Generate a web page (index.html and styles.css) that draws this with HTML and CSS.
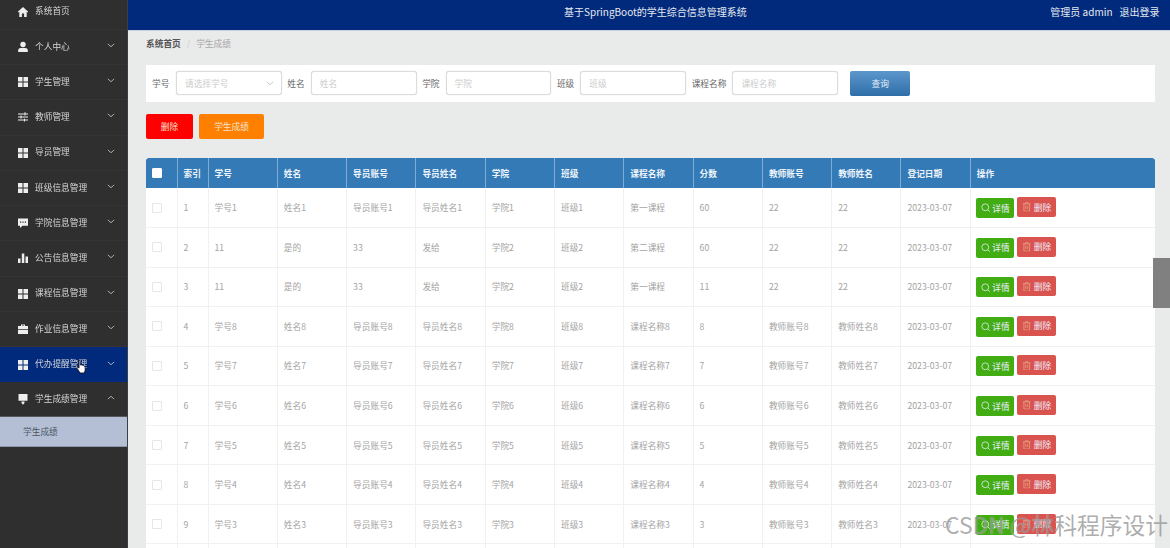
FILE: index.html
```html
<!DOCTYPE html>
<html lang="zh-CN">
<head>
<meta charset="utf-8">
<title>学生成绩</title>
<link rel="stylesheet" href="styles.css">
</head>
<body>
<svg class="defs" width="0" height="0" aria-hidden="true">
  <symbol id="i-home" viewBox="0 0 12 12"><path d="M6 1 .8 5.8l.7.7.8-.7V11h2.6V7.6h2.2V11h2.6V5.8l.8.7.7-.7z"/></symbol>
  <symbol id="i-user" viewBox="0 0 12 12"><circle cx="6" cy="3.4" r="2.7"/><path d="M1.2 11V9.2C1.2 7.6 3 6.8 6 6.8s4.800.8 4.800 2.400V11z"/></symbol>
  <symbol id="i-grid" viewBox="0 0 12 12"><path d="M1 1h4.500v4.500H1zM6.500 1H11v4.500H6.500zM1 6.500h4.500V11H1zM6.500 6.500H11V11H6.500z"/></symbol>
  <symbol id="i-tune" viewBox="0 0 12 12"><path d="M1 2.400h6.500V1.300h1v1.100H11v1H8.500v1.100h-1V3.400H1zM1 5.500h2.500V4.600h1v.9H11v1H4.500v1h-1v-1H1zM1 8.600h6V7.700h1v.9h3v1H8v1H7v-1H1z"/></symbol>
  <symbol id="i-chat" viewBox="0 0 12 12"><path d="M1 1.500h10v7.300H5.500L3 11V8.800H1z"/><path fill="#2f2f2f" d="M3 4.500h1.200v1.200H3zM5.400 4.500h1.200v1.200H5.400zM7.800 4.500H9v1.200H7.800z"/></symbol>
  <symbol id="i-bars" viewBox="0 0 12 12"><path d="M1 6.500h2.500V11H1zM4.800 1.500h2.500V11H4.800zM8.500 4.500H11V11H8.500z"/></symbol>
  <symbol id="i-case" viewBox="0 0 12 12"><path d="M4 3V1.500h4V3h3v3.200H1V3zm1 0h2v-.6H5zM1 7h10v4H1z"/></symbol>
  <symbol id="i-pin" viewBox="0 0 12 12"><path d="M1.500 1h9v6.800h-9zM4.500 8.500h3V10L6 11.800 4.500 10z"/></symbol>
  <symbol id="i-down" viewBox="0 0 10 6"><path d="M1 1l4 3.500L9 1" fill="none" stroke="currentColor" stroke-width="1"/></symbol>
  <symbol id="i-up" viewBox="0 0 10 6"><path d="M1 5l4-3.500L9 5" fill="none" stroke="currentColor" stroke-width="1"/></symbol>
  <symbol id="i-search" viewBox="0 0 10 10"><circle cx="4.500" cy="4.500" r="3.600" fill="none" stroke="currentColor" stroke-width=".8"/><path d="M7.200 7.200 9.300 9.300" stroke="currentColor" stroke-width=".8"/></symbol>
  <symbol id="i-trash" viewBox="0 0 10 10"><path d="M1 2h8M3.500 2V.8h3V2M2 2v7.500h6V2M4 4v3.500M6 4v3.500" fill="none" stroke="currentColor" stroke-width=".7"/></symbol>
</svg>
<div class="app">
  <aside class="side">
    <ul class="menu">
      <li class="item"><svg class="ic"><use href="#i-home"/></svg><span class="lbl">系统首页</span></li>
      <li class="item"><svg class="ic"><use href="#i-user"/></svg><span class="lbl">个人中心</span><svg class="chev"><use href="#i-down"/></svg></li>
      <li class="item"><svg class="ic"><use href="#i-grid"/></svg><span class="lbl">学生管理</span><svg class="chev"><use href="#i-down"/></svg></li>
      <li class="item"><svg class="ic"><use href="#i-tune"/></svg><span class="lbl">教师管理</span><svg class="chev"><use href="#i-down"/></svg></li>
      <li class="item"><svg class="ic"><use href="#i-grid"/></svg><span class="lbl">导员管理</span><svg class="chev"><use href="#i-down"/></svg></li>
      <li class="item"><svg class="ic"><use href="#i-grid"/></svg><span class="lbl">班级信息管理</span><svg class="chev"><use href="#i-down"/></svg></li>
      <li class="item"><svg class="ic"><use href="#i-chat"/></svg><span class="lbl">学院信息管理</span><svg class="chev"><use href="#i-down"/></svg></li>
      <li class="item"><svg class="ic"><use href="#i-bars"/></svg><span class="lbl">公告信息管理</span><svg class="chev"><use href="#i-down"/></svg></li>
      <li class="item"><svg class="ic"><use href="#i-grid"/></svg><span class="lbl">课程信息管理</span><svg class="chev"><use href="#i-down"/></svg></li>
      <li class="item"><svg class="ic"><use href="#i-case"/></svg><span class="lbl">作业信息管理</span><svg class="chev"><use href="#i-down"/></svg></li>
      <li class="item active"><svg class="ic"><use href="#i-grid"/></svg><span class="lbl">代办提醒管理</span><svg class="chev"><use href="#i-down"/></svg>
        <svg class="cursor" viewBox="0 0 12 16"><path d="M3.500 1.200c.7 0 1.200.5 1.200 1.200v4l.6-.2.700.1.500.4.700-.1.600.4.700 0 .8.600.7 1.500v3l-1 3H4.500l-3.300-5c-.4-.7 0-1.300.6-1.300.4 0 .8.300 1.500 1V2.400c0-.7-.1-1.200.2-1.200z" fill="#fff" stroke="#111" stroke-width=".9"/></svg>
      </li>
      <li class="item open"><svg class="ic"><use href="#i-pin"/></svg><span class="lbl">学生成绩管理</span><svg class="chev"><use href="#i-up"/></svg></li>
      <li class="sub">学生成绩</li>
    </ul>
  </aside>
  <div class="main">
    <header class="top">
      <div class="title">基于SpringBoot的学生综合信息管理系统</div>
      <div class="user"><span>管理员 admin</span><span>退出登录</span></div>
    </header>
    <div class="content">
      <nav class="crumb"><b>系统首页</b><i>/</i><span>学生成绩</span></nav>
      <form class="search">
        <label>学号</label>
        <div class="field select"><span>请选择学号</span><svg class="chev"><use href="#i-down"/></svg></div>
        <label>姓名</label><div class="field"><span>姓名</span></div>
        <label>学院</label><div class="field"><span>学院</span></div>
        <label>班级</label><div class="field"><span>班级</span></div>
        <label>课程名称</label><div class="field"><span>课程名称</span></div>
        <div class="query">查询</div>
      </form>
      <div class="actions"><div class="btn red">删除</div><div class="btn orange">学生成绩</div></div>
      <table class="grid">
        <thead>
          <tr><th><span class="check head"></span></th><th>索引</th><th>学号</th><th>姓名</th><th>导员账号</th><th>导员姓名</th><th>学院</th><th>班级</th><th>课程名称</th><th>分数</th><th>教师账号</th><th>教师姓名</th><th>登记日期</th><th>操作</th></tr>
        </thead>
        <tbody>
          <tr><td><span class="check"></span></td><td>1</td><td>学号1</td><td>姓名1</td><td>导员账号1</td><td>导员姓名1</td><td>学院1</td><td>班级1</td><td>第一课程</td><td>60</td><td>22</td><td>22</td><td>2023-03-07</td><td><div class="ops"><span class="mini ok"><svg><use href="#i-search"/></svg>详情</span><span class="mini del"><svg><use href="#i-trash"/></svg>删除</span></div></td></tr>
          <tr><td><span class="check"></span></td><td>2</td><td>11</td><td>是的</td><td>33</td><td>发给</td><td>学院2</td><td>班级2</td><td>第二课程</td><td>60</td><td>22</td><td>22</td><td>2023-03-07</td><td><div class="ops"><span class="mini ok"><svg><use href="#i-search"/></svg>详情</span><span class="mini del"><svg><use href="#i-trash"/></svg>删除</span></div></td></tr>
          <tr><td><span class="check"></span></td><td>3</td><td>11</td><td>是的</td><td>33</td><td>发给</td><td>学院2</td><td>班级2</td><td>第一课程</td><td>11</td><td>22</td><td>22</td><td>2023-03-07</td><td><div class="ops"><span class="mini ok"><svg><use href="#i-search"/></svg>详情</span><span class="mini del"><svg><use href="#i-trash"/></svg>删除</span></div></td></tr>
          <tr><td><span class="check"></span></td><td>4</td><td>学号8</td><td>姓名8</td><td>导员账号8</td><td>导员姓名8</td><td>学院8</td><td>班级8</td><td>课程名称8</td><td>8</td><td>教师账号8</td><td>教师姓名8</td><td>2023-03-07</td><td><div class="ops"><span class="mini ok"><svg><use href="#i-search"/></svg>详情</span><span class="mini del"><svg><use href="#i-trash"/></svg>删除</span></div></td></tr>
          <tr><td><span class="check"></span></td><td>5</td><td>学号7</td><td>姓名7</td><td>导员账号7</td><td>导员姓名7</td><td>学院7</td><td>班级7</td><td>课程名称7</td><td>7</td><td>教师账号7</td><td>教师姓名7</td><td>2023-03-07</td><td><div class="ops"><span class="mini ok"><svg><use href="#i-search"/></svg>详情</span><span class="mini del"><svg><use href="#i-trash"/></svg>删除</span></div></td></tr>
          <tr><td><span class="check"></span></td><td>6</td><td>学号6</td><td>姓名6</td><td>导员账号6</td><td>导员姓名6</td><td>学院6</td><td>班级6</td><td>课程名称6</td><td>6</td><td>教师账号6</td><td>教师姓名6</td><td>2023-03-07</td><td><div class="ops"><span class="mini ok"><svg><use href="#i-search"/></svg>详情</span><span class="mini del"><svg><use href="#i-trash"/></svg>删除</span></div></td></tr>
          <tr><td><span class="check"></span></td><td>7</td><td>学号5</td><td>姓名5</td><td>导员账号5</td><td>导员姓名5</td><td>学院5</td><td>班级5</td><td>课程名称5</td><td>5</td><td>教师账号5</td><td>教师姓名5</td><td>2023-03-07</td><td><div class="ops"><span class="mini ok"><svg><use href="#i-search"/></svg>详情</span><span class="mini del"><svg><use href="#i-trash"/></svg>删除</span></div></td></tr>
          <tr><td><span class="check"></span></td><td>8</td><td>学号4</td><td>姓名4</td><td>导员账号4</td><td>导员姓名4</td><td>学院4</td><td>班级4</td><td>课程名称4</td><td>4</td><td>教师账号4</td><td>教师姓名4</td><td>2023-03-07</td><td><div class="ops"><span class="mini ok"><svg><use href="#i-search"/></svg>详情</span><span class="mini del"><svg><use href="#i-trash"/></svg>删除</span></div></td></tr>
          <tr><td><span class="check"></span></td><td>9</td><td>学号3</td><td>姓名3</td><td>导员账号3</td><td>导员姓名3</td><td>学院3</td><td>班级3</td><td>课程名称3</td><td>3</td><td>教师账号3</td><td>教师姓名3</td><td>2023-03-07</td><td><div class="ops"><span class="mini ok"><svg><use href="#i-search"/></svg>详情</span><span class="mini del"><svg><use href="#i-trash"/></svg>删除</span></div></td></tr>
          <tr><td></td><td></td><td></td><td></td><td></td><td></td><td></td><td></td><td></td><td></td><td></td><td></td><td></td><td></td></tr>
        </tbody>
      </table>
    </div>
  </div>
  <div class="thumb"></div>
  <div class="mark">CSDN @林科程序设计</div>
</div>
</body>
</html>
```
FILE: styles.css
```css
* { box-sizing: border-box; }
html, body { margin: 0; height: 548px; overflow: hidden; background: #e9eaea; }
body { font-family: "Noto Sans CJK SC", "Liberation Sans", sans-serif; font-size: 8.7px; color: #888; }
.defs { position: absolute; }
.app { position: relative; display: flex; width: 1170px; height: 548px; overflow: hidden; filter: blur(.35px); }
.side { flex: 0 0 128px; background: #2f2f2f; overflow: hidden; border-right: 1px solid #3a4048; }
.menu { list-style: none; margin: -5.4px 0 0; padding: 0; }
.item { position: relative; display: flex; align-items: center; height: 35.25px; padding-left: 17px; color: #d6d6d6; border-bottom: 1px solid #353535; }
.item.active { background: #012a7c; border-bottom: 0; }
.item.open { height: 35px; border-bottom: 1px solid #55585c; }
.ic { width: 12px; height: 12px; margin-right: 6px; fill: #eee; flex: none; }
.lbl { flex: 1; line-height: 1; }
.chev { width: 8px; height: 5px; margin-right: 12px; margin-top: -3px; color: #ccc; flex: none; }
.cursor { position: absolute; left: 76px; top: 12px; width: 11px; height: 15px; }
.sub { height: 30px; display: flex; align-items: center; padding-left: 23px; background: #b4bfd6; color: #4b5563; border-bottom: 1px solid #8d97ab; }
.main { flex: 1; min-width: 0; display: flex; flex-direction: column; }
.top { flex: 0 0 31px; display: flex; align-items: flex-start; justify-content: space-between; background: #012a7c; color: #e4e8f0; font-size: 10px; line-height: 24px; border-bottom: 1px solid #c8d2e4; position: relative; }
.title { margin-left: 436px; }
.user { display: flex; gap: 7px; margin-right: 10.5px; }
.content { flex: 1; padding: 0 15px 0 18px; background: #e9eaea; }
.crumb { height: 34px; display: flex; align-items: flex-start; gap: 6px; font-size: 8.7px; color: #a8a8a8; padding-top: 6px; }
.crumb b { color: #555; font-weight: 700; }
.crumb i { color: #ccc; font-style: normal; }
.search { height: 37px; display: flex; align-items: center; background: #fff; padding: 0 0 1px 6px; color: #666; }
.search label { margin-right: 6px; flex: none; }
.field { width: 105.8px; height: 24px; border: 1px solid #dcdcdc; border-radius: 3px; box-shadow: 0 0 1px #ccc; background: #fff; display: flex; align-items: center; justify-content: space-between; padding-left: 8px; color: #ccc; margin-right: 5.6px; flex: none; }
.field.select { margin-left: .6px; }
.field .chev { margin: 0 7px 0 0; color: #bbb; }
.query { width: 60px; height: 25px; margin-left: 6.4px; background: linear-gradient(#5c97cc, #2f6ea9); border-radius: 2px; color: #e8eff6; display: flex; align-items: center; justify-content: center; flex: none; }
.actions { display: flex; gap: 6px; margin-top: 12px; }
.btn { height: 25px; border-radius: 2px; color: #f2e3d0; display: flex; align-items: center; justify-content: center; }
.red { width: 47px; background: #ff0000; }
.orange { width: 65px; background: #ff8000; }
.grid { width: 1009px; margin-top: 19px; table-layout: fixed; border-collapse: collapse; background: #fff; }
.grid th, .grid td { padding: 0 0 0 6px; text-align: left; font-weight: 400; overflow: hidden; white-space: nowrap; }
.grid th { height: 30px; background: #337ab7; color: #eef4fa; font-weight: 700; border-left: 1px solid #7fabd2; }
.grid th:first-child { border-left: 0; border-radius: 3px 0 0 0; }
.grid th:last-child { border-radius: 0 3px 0 0; }
.grid td { height: 39.55px; color: #a3a3a3; border-left: 1px solid #f1f1f1; border-bottom: 1px solid #f1f1f1; }
.grid td:first-child { border-left: 0; }
.grid th:nth-child(1) { width: 31px; }
.grid th:nth-child(2) { width: 31px; }
.grid th:nth-child(n+3) { width: 69.3px; }
.grid th:last-child { width: 185px; }
.check { display: block; width: 10px; height: 10px; border: 1px solid #e6e6e6; border-radius: 1px; background: #fff; }
.check.head { border-color: #fff; }
.ops { display: flex; align-items: center; gap: 3px; margin-left: -.5px; }
.mini { display: flex; align-items: center; justify-content: center; gap: 2px; height: 20px; border-radius: 2px; color: #eef; font-size: 8.7px; }
.mini svg { width: 9.5px; height: 9.5px; flex: none; }
.ok { width: 38px; background: #41ad12; margin-top: 1px; }
.del { width: 39px; background: #d9534f; margin-top: -1px; }
.del svg { color: #eda; opacity: .7; }
.thumb { position: absolute; left: 1153px; top: 258px; width: 17px; height: 50px; background: #808080; }
.mark { position: absolute; left: 945px; top: 510px; font-size: 22.8px; line-height: 30px; white-space: nowrap; color: rgba(120,120,120,.62); text-shadow: 0 0 1px rgba(255,255,255,.5); }
```
